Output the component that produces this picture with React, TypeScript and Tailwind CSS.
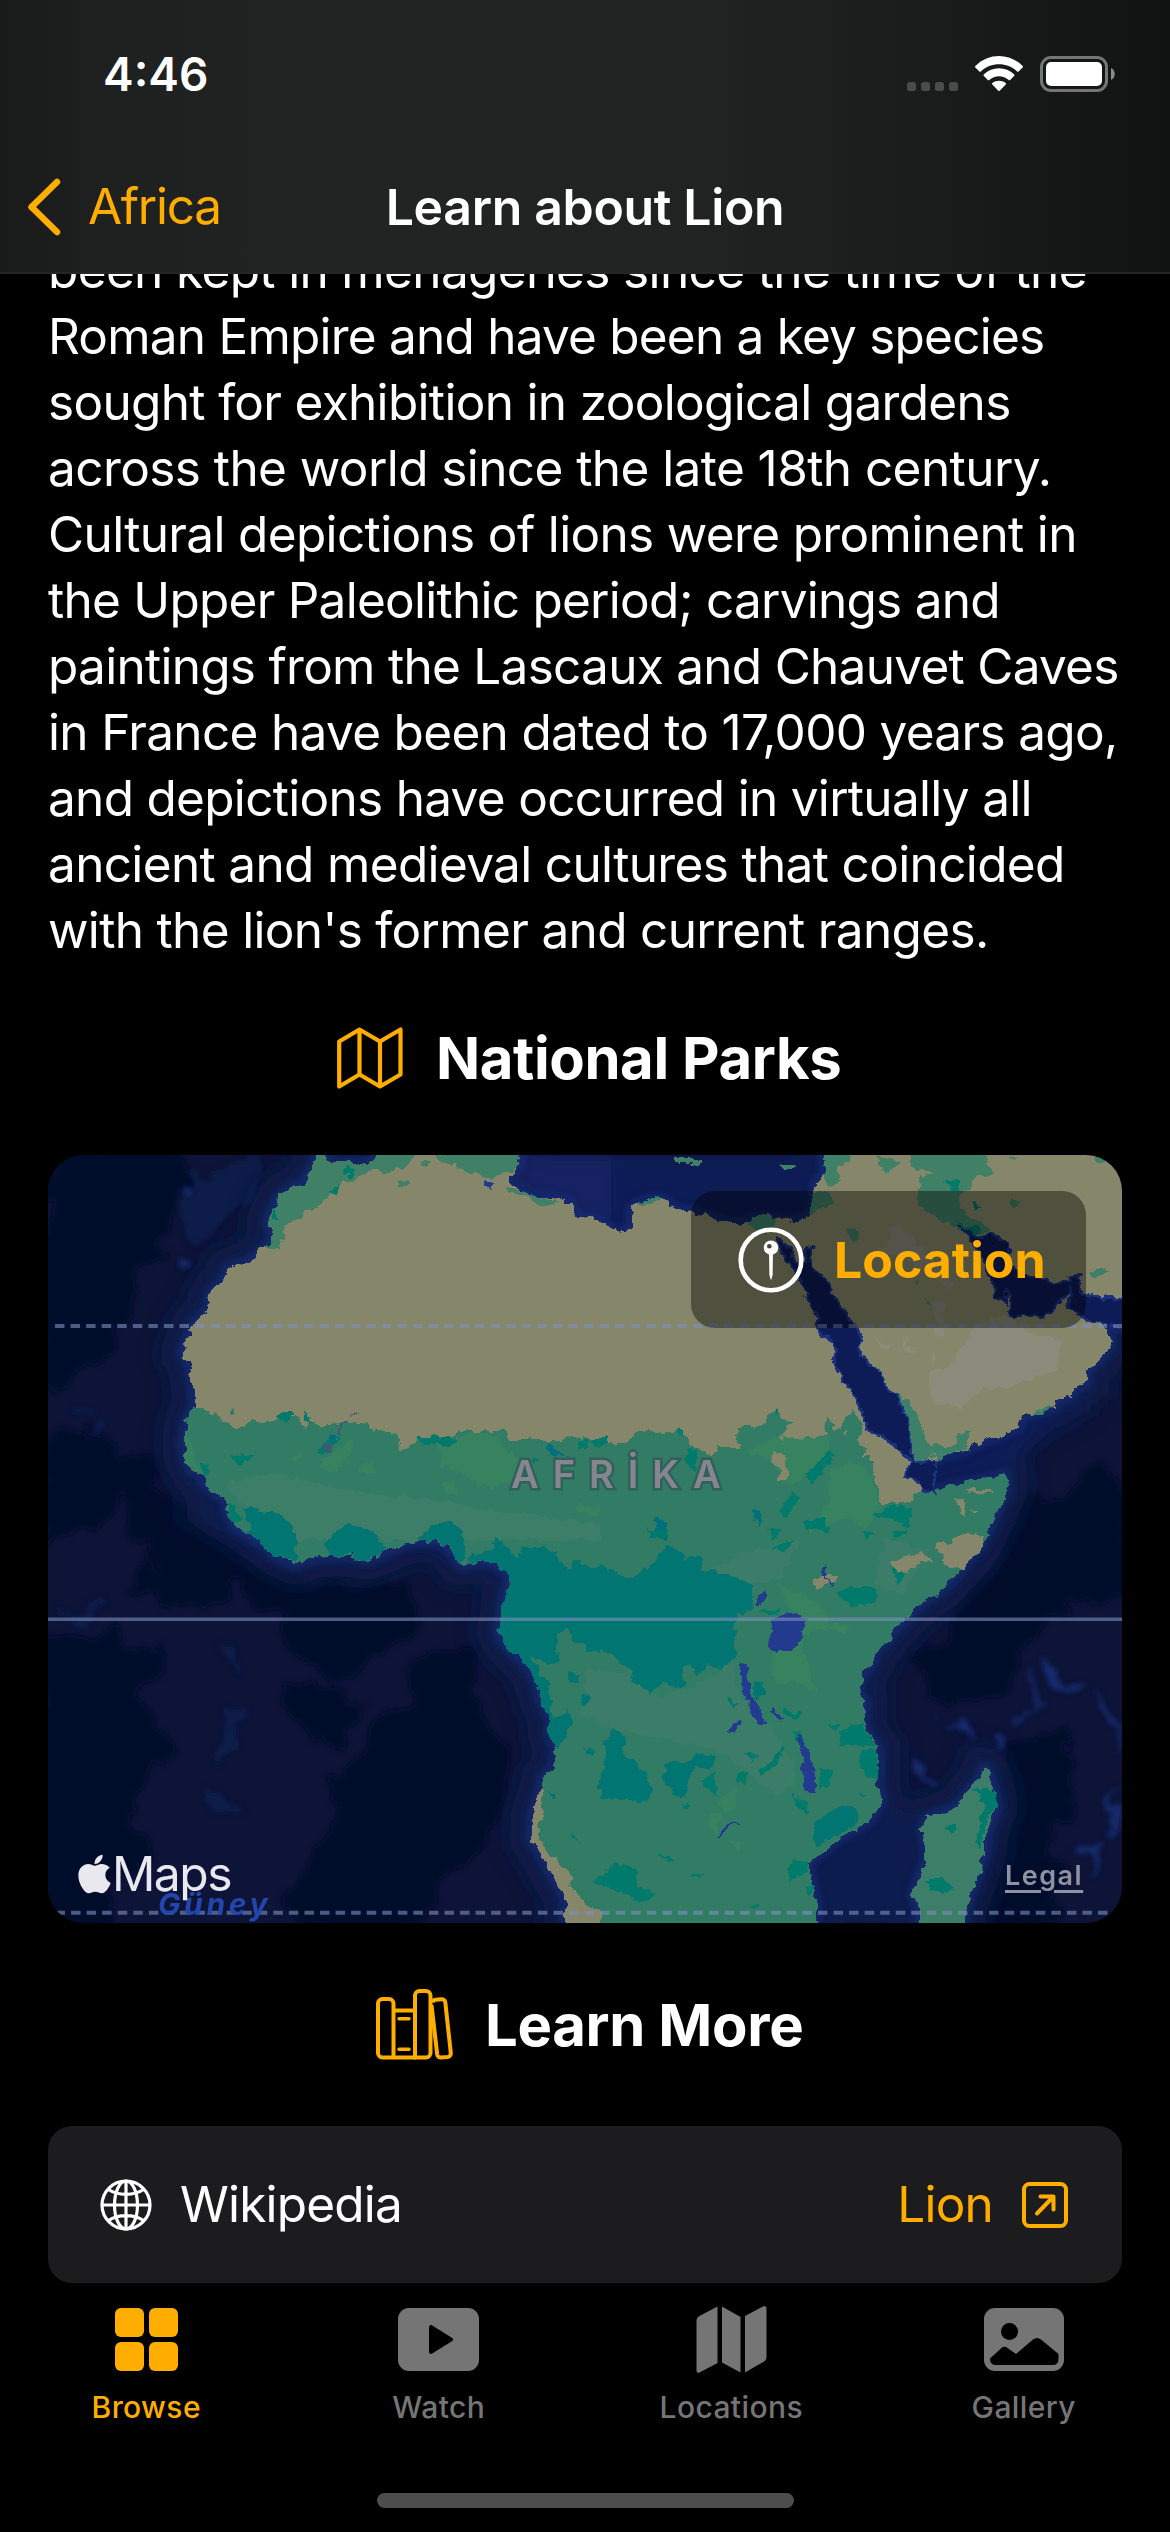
import type { ReactNode } from "react";
import { FaApple } from "react-icons/fa";

const LINES: { text: string; cls: string }[] = [
  { text: "been kept in menageries since the time of the", cls: "tracking-[-0.64px]" },
  { text: "Roman Empire and have been a key species", cls: "tracking-[-0.78px]" },
  { text: "sought for exhibition in zoological gardens", cls: "tracking-[-0.67px]" },
  { text: "across the world since the late 18th century.", cls: "tracking-[-0.57px]" },
  { text: "Cultural depictions of lions were prominent in", cls: "tracking-[-0.65px]" },
  { text: "the Upper Paleolithic period; carvings and", cls: "tracking-[-0.74px]" },
  { text: "paintings from the Lascaux and Chauvet Caves", cls: "tracking-[-0.72px]" },
  { text: "in France have been dated to 17,000 years ago,", cls: "tracking-[-0.67px]" },
  { text: "and depictions have occurred in virtually all", cls: "tracking-[-0.7px]" },
  { text: "ancient and medieval cultures that coincided", cls: "tracking-[-0.65px]" },
  { text: "with the lion's former and current ranges.", cls: "tracking-[-0.66px]" },
];

/* Map tiles: north-west, north-east, south-west, south-east. */
const NW = "translate(40 1140) scale(.357143 .333333)";
const NE = "translate(580 1140) scale(.357143 .333333)";
const SW = "translate(40 1530) scale(.357143 .333333)";
const SE = "translate(580 1530) scale(.357143 .333333)";

type Layer = { tile: string; fill: string; d: string };

const LAND: { tile: string; d: string }[] = [
  { tile: NW, d: "M775 30L798 30L800 50L825 68L920 68L940 45L942 30L1340 30L1343 75L1325 100L1310 118L1345 150L1390 170L1440 172L1485 188L1500 230L1568 248L1568 1200L600 1200L550 1160L525 1125L520 1085L455 1030L455 1000L425 995L410 965L400 900L405 880L412 840L430 800L430 750L420 700L425 680L400 650L398 635L415 590L430 550L470 510L475 470L490 440L515 420L525 385L550 375L580 368L600 350L630 322L650 305L650 280L638 255L640 235L655 205L668 170L700 145L740 125L755 95L770 70Z" },
  { tile: NE, d: "M0 235L45 240L75 255L100 275L130 275L145 255L145 200L170 185L215 172L240 180L255 200L310 215L360 228L410 248L460 252L480 235L550 235L560 245L615 238L645 225L655 180L660 130L685 100L680 30L1540 30L1540 565L1500 560L1460 555L1490 605L1455 660L1420 690L1420 730L1380 745L1375 770L1335 780L1330 800L1275 820L1240 830L1225 865L1190 880L1130 905L1080 930L1000 955L960 970L925 975L915 1010L935 1015L965 1050L990 1055L1030 1040L1100 1025L1150 1015L1190 1000L1195 1030L1190 1060L1165 1125L1130 1200L0 1200Z" },
  { tile: SW, d: "M560 0L600 25L630 50L660 80L715 105L740 92L790 80L865 78L915 90L970 68L1015 45L1060 33L1120 38L1150 65L1175 105L1270 98L1285 118L1307 122L1312 160L1298 200L1290 270L1280 300L1300 345L1340 385L1375 420L1390 470L1405 520L1430 570L1425 610L1443 650L1440 710L1410 740L1398 790L1380 850L1375 930L1400 970L1430 1030L1470 1100L1470 1200L1568 1200L1568 0Z" },
  { tile: SE, d: "M0 0L1135 0L1120 50L1060 130L1010 185L970 210L920 260L890 290L860 335L825 365L820 400L790 440L778 490L800 515L795 570L810 625L835 650L835 770L845 810L820 860L790 890L725 925L700 950L640 1000L650 1060L662 1120L660 1200L0 1200Z" },
  { tile: SE, d: "M1130 713L1140 715L1155 760L1168 830L1150 880L1140 910L1135 970L1110 1050L1085 1120L1070 1200L948 1200L945 1130L930 1095L965 1000L970 970L958 900L970 865L1010 850L1060 825L1090 780L1120 745Z" },
];

const G = "#327c66";
const T = "#007571";
const D = "#007a6b";
const L = "#38835f";
const M = "#418066";
const S = "#86866a";
const W = "#203a8e";

const COVER: Layer[] = [
  // northern coast vegetation
  { tile: NW, fill: M, d: "M775 30L798 30L800 50L825 68L920 68L940 45L942 30L1050 30L1050 55L1020 80L980 95L920 95L870 122L845 125L840 150L800 170L780 195L740 220L680 265L680 290L668 325L630 322L650 305L638 255L640 235L655 205L668 170L700 145L740 125L755 95L770 70Z M1110 52L1150 30L1340 30L1343 75L1310 105L1270 108L1250 118L1220 100L1180 85Z M1300 140L1345 150L1390 170L1462 185L1410 203L1380 180L1350 165L1310 162Z M1000 120L1032 118L1028 135L1005 142Z M1065 60L1095 50L1090 80L1068 78Z" },
  { tile: NW, fill: D, d: "M855 80L880 95L870 112L852 100Z M805 155L845 138L830 165Z M655 208L676 238L650 238Z" },
  { tile: NW, fill: W, d: "M1245 125L1272 122L1260 148Z" },
  // sahel and savanna
  { tile: NW, fill: G, d: "M430 800L470 800L475 820L505 825L510 845L535 850L555 865L600 840L620 848L660 835L690 845L720 825L740 862L755 845L780 858L830 850L860 845L915 850L925 868L970 875L1000 885L1010 925L1050 910L1070 890L1165 890L1175 865L1220 880L1290 868L1320 898L1430 905L1480 888L1520 895L1568 905L1568 1200L600 1200L550 1160L525 1125L520 1085L455 1030L455 1000L425 995L410 965L400 900L405 880L412 840Z M527 810L545 806L545 828L530 826Z" },
  { tile: NE, fill: G, d: "M0 885L30 895L80 910L130 905L155 875L230 880L270 865L290 890L310 915L335 925L370 950L385 925L450 925L440 865L480 860L485 875L525 840L530 815L555 800L565 840L600 850L570 865L570 890L620 895L690 890L695 830L720 870L740 840L760 810L785 840L790 880L775 900L800 935L780 945L815 950L820 1020L840 1040L840 1085L920 1085L965 1055L990 1055L1030 1040L1190 1000L1195 1030L1190 1060L1165 1125L1130 1200L0 1200Z" },
  { tile: SW, fill: G, d: "M560 0L600 25L630 50L660 80L715 105L740 92L790 80L865 78L915 90L970 68L1015 45L1060 33L1120 38L1150 65L1175 105L1270 98L1285 118L1307 122L1312 160L1298 200L1290 270L1280 300L1300 345L1340 385L1375 420L1390 470L1405 520L1430 570L1425 610L1443 650L1440 710L1410 740L1398 790L1380 850L1375 930L1400 970L1430 1030L1470 1100L1470 1200L1568 1200L1568 0Z" },
  { tile: SE, fill: G, d: LAND[3].d },
  { tile: SE, fill: "#3c7e68", d: LAND[4].d },
  // paler green
  { tile: NW, fill: L, d: "M1110 920L1200 880L1290 885L1295 920L1340 960L1330 1030L1230 1045L1190 1000L1150 990L1120 970Z M790 960L875 898L870 940L835 1000L780 980Z M402 868L425 905L430 950L455 995L410 970Z M895 980L920 970L940 1000L900 1000Z M700 950L745 935L720 960Z M1130 1040L1160 1020L1165 1060L1140 1060Z M1490 1090L1568 1095L1568 1125L1510 1120Z" },
  { tile: NE, fill: L, d: "M455 930L570 890L700 895L690 960L640 990L600 1040L560 1010L530 960Z M700 990L780 960L815 1010L840 1100L800 1160L740 1130L640 1180L700 1080Z M0 1095L50 1095L40 1115L0 1120Z" },
  { tile: SE, fill: L, d: "M560 170L620 190L680 240L700 300L620 310L600 250Z M535 370L620 330L640 420L665 500L610 450L540 460Z M385 810L440 780L430 840L395 830Z M355 860L400 855L375 910Z M560 770L600 680L600 760Z M420 930L450 930L440 965Z M690 280L760 285L740 310Z" },
  { tile: NW, fill: "#3c7e68", d: "M520 1030L640 1000L900 1060L1100 1080L1300 1120L1568 1150L1568 1200L700 1200L680 1130L560 1090Z" },
  { tile: SE, fill: "#3b7d68", d: "M20 420L130 430L200 500L300 480L430 400L450 500L540 600L600 720L560 800L380 660L120 600L0 560Z M350 130L480 60L620 30L560 150L490 160Z M850 20L980 60L900 200L830 160Z" },
  // rainforest
  { tile: NW, fill: T, d: "M570 1105L600 1102L625 1120L655 1112L690 1140L715 1165L710 1200L600 1200L590 1150L570 1130Z M815 1200L835 1165L865 1145L920 1195L920 1200Z M1070 1200L1090 1160L1135 1145L1170 1160L1185 1200Z" },
  { tile: NW, fill: D, d: "M525 1080L545 1100L560 1140L540 1150L525 1120Z M650 822L710 815L700 845L670 840Z M732 812L758 830L760 850L740 835Z M1060 890L1100 885L1115 895L1140 885L1165 905L1140 925L1110 905L1080 918Z M530 950L605 940L585 955L560 978Z M780 940L800 900L840 885L835 910L790 945Z M450 970L480 985L465 1000L450 995Z M1505 905L1530 895L1530 920L1510 925Z M1375 950L1395 950L1385 970Z" },
  { tile: NW, fill: "#007080", d: "M1420 908L1440 920L1475 950L1440 950L1420 925Z M815 890L835 880L832 905L815 905Z" },
  { tile: NW, fill: "#3f5a76", d: "M790 910L820 912L812 937L800 935Z M835 862L845 862L842 882L832 880Z M845 852L875 822L890 820L890 825L868 832L850 856Z" },
  { tile: NE, fill: D, d: "M0 895L25 895L15 925L0 920Z M35 905L80 882L70 910L50 925Z M265 865L290 880L285 895Z M300 920L330 930L320 1000L305 980Z M640 1000L700 930L715 940L680 990L640 1045Z M560 1120L590 1060L615 1075L570 1130Z M820 1130L880 1090L930 1110L920 1160L880 1140Z M620 1145L690 1130L695 1175L640 1170Z M530 1165L570 1165L540 1200Z M545 800L560 820L545 828Z M880 1170L920 1165L890 1200Z" },
  { tile: NE, fill: "#00707a", d: "M200 1180L215 1130L250 1155L240 1200L200 1200Z M485 1105L505 1120L505 1160L488 1140Z" },
  { tile: SW, fill: T, d: "M575 5L600 -6L690 -6L715 30L725 80L720 102L660 80Z M795 45L820 10L860 -6L930 0L945 30L975 62L915 88L860 76L805 76Z M1050 30L1090 -6L1180 0L1190 80L1165 95L1150 62L1120 36Z M1205 98L1200 85L1260 60L1275 25L1310 45L1340 85L1350 55L1410 50L1445 75L1445 100L1490 115L1520 105L1568 125L1568 365L1530 365L1525 340L1465 290L1450 310L1450 360L1460 400L1420 405L1378 378L1388 410L1430 470L1435 560L1480 540L1492 580L1455 660L1440 650L1426 605L1430 570L1405 520L1390 470L1375 420L1340 385L1300 345L1280 300L1290 270L1298 200L1312 160L1307 122L1285 118L1270 98Z M1475 415L1510 440L1500 455L1480 440Z M1505 495L1530 490L1545 510L1520 535Z M1520 648L1552 660L1550 675L1525 665Z M1480 910L1520 935L1490 930Z M1425 790L1445 795L1430 810Z" },
  { tile: SE, fill: T, d: "M-20 85L0 95L40 115L60 105L100 130L150 145L180 110L210 100L220 70L245 45L285 60L290 90L335 80L345 120L400 130L440 145L485 165L485 240L445 255L430 310L440 385L400 415L350 405L330 440L310 405L290 415L290 475L220 460L195 495L160 460L130 420L100 380L65 350L40 365L0 340L-20 340Z M70 625L100 590L125 625L120 680L150 700L190 740L205 780L200 805L165 815L60 805L50 760L75 710L65 670Z M240 700L310 690L340 665L380 680L370 715L320 715L300 760L300 800L265 800L230 740Z M0 485L32 505L15 530L0 520Z M655 875L700 845L740 825L785 840L780 880L720 915L655 955Z M480 460L515 460L515 495L490 515Z" },
  { tile: SE, fill: D, d: "M780 670L830 660L835 745L800 740Z M725 605L790 575L810 630L830 652L730 645Z M35 1055L100 1000L160 1020L160 1070L205 1090L175 1125L120 1090Z M720 180L820 165L830 215L750 230Z M585 790L635 820L635 855Z M190 0L250 0L220 32Z M670 720L705 720L705 760L670 775Z M580 1020L600 990L640 990L635 1030L590 1050Z M500 240L560 235L555 252L510 252Z M497 720L540 695L560 645L570 650L545 710L510 730Z M600 600L620 605L640 650L605 640Z M440 725L475 735L460 765L440 750Z M410 510L445 515L430 535Z M540 55L595 35L570 70Z M780 0L830 10L805 40Z M875 120L905 105L910 130L895 165Z M1098 780L1130 770L1160 785L1168 830L1140 870L1125 950L1105 940L1120 890L1130 830L1120 800Z M975 1050L1010 1040L1045 1075L1020 1095L980 1080Z M1028 885L1050 880L1045 918L1030 905Z M335 750L375 730L380 795L350 770Z M560 540L625 545L610 565L580 555Z M690 590L725 575L720 600Z M280 825L308 820L295 838Z M778 790L804 795L790 808Z M470 1125L500 1125L485 1138Z M625 1070L655 1060L650 1100Z M225 970L255 990L245 1000Z M305 1035L345 1025L340 1045Z M465 665L500 675L480 700Z" },
  // arid pockets
  { tile: NE, fill: S, d: "M540 935L575 950L582 1010L555 1020L560 985L540 970Z M555 890L575 895L570 910Z M1050 1075L1075 1080L1080 1125L1060 1115Z M1090 1110L1118 1115L1105 1125Z M1075 1048L1150 1050L1155 1062L1090 1060Z M1045 1190L1110 1180L1120 1200L1045 1200Z M640 880L675 870L660 885Z M735 880L745 865L745 890Z" },
  { tile: SE, fill: S, d: "M990 40L1040 35L1070 10L1125 15L1115 65L1070 122L1015 95L1020 75L990 68Z M875 95L960 65L990 95L950 85L920 125L875 120Z M650 150L680 135L720 140L705 160L670 175Z M0 1125L30 1145L48 1200L0 1200Z" },
  { tile: SW, fill: S, d: "M1398 782L1408 785L1408 850L1395 890L1400 930L1430 980L1470 1020L1490 1040L1485 1065L1510 1100L1530 1130L1568 1140L1568 1200L1470 1200L1470 1100L1430 1030L1400 970L1375 930L1380 850Z" },
  // arabia and the levant
  { tile: NE, fill: "#3c806b", d: "M880 760L920 780L950 850L985 915L1030 920L1060 910L1055 875L1085 870L1085 925L1000 955L1005 935L960 970L935 965L910 870L905 800Z M1265 820L1300 800L1320 803L1300 818Z M470 250L480 235L515 225L550 235L550 255L515 285L500 265Z M1425 395L1450 385L1478 405L1440 408Z" },
  { tile: NE, fill: M, d: "M920 30L1130 30L1155 110L1110 100L1080 160L1060 190L1085 230L1120 240L1145 270L1100 290L1040 260L990 230L945 190L950 110L985 100L990 90L930 90Z M680 30L750 30L755 65L720 80L730 130L690 140L685 100Z M820 50L890 60L890 75L855 97Z M660 155L690 160L710 185L680 205L650 235L640 220Z M750 270L780 275L775 305L755 300Z M1205 170L1235 185L1215 205Z M1435 30L1500 30L1500 62L1450 60Z M1195 50L1225 58L1210 68Z M160 190L215 168L240 178L180 198Z M960 480L985 500L975 505Z M935 420L950 430L940 445Z" },
  { tile: NE, fill: D, d: "M1020 125L1060 120L1060 150L1040 155Z M1095 180L1118 195L1105 210Z M1050 240L1120 270L1110 290Z" },
  { tile: NE, fill: "#8b8b7b", d: "M980 700L1030 690L1050 650L1075 620L1090 570L1130 545L1210 530L1260 580L1350 605L1330 695L1200 740L1120 750L1065 805L980 785Z M905 590L945 640L915 635Z M985 635L1002 650L985 672Z M838 600L862 620L860 640L840 625Z M870 255L905 255L935 300L1050 430L1040 450L960 390L900 350L820 330L870 300Z M990 480L1020 490L1020 590L995 580Z" },
];

const WATER: { tile: string; d: string }[] = [
  { tile: NE, d: "M553 300L570 303L605 365L630 372L632 335L648 318L645 370L690 420L725 490L775 560L790 600L785 645L850 715L860 750L890 770L915 840L925 900L935 970L965 970L1000 955L990 1055L965 1050L935 1015L912 1012L925 965L860 900L820 880L800 855L780 780L720 700L710 605L665 575L665 530L630 465L610 400L575 350Z" },
  { tile: NE, d: "M1060 255L1085 270L1110 290L1160 280L1195 310L1200 370L1240 400L1330 430L1370 425L1370 408L1400 410L1405 460L1460 472L1540 480L1540 570L1450 545L1415 540L1390 525L1370 500L1370 450L1340 490L1300 530L1220 535L1200 515L1208 490L1195 450L1190 495L1165 465L1155 430L1120 340L1090 290Z" },
];

const LAKES =
  "M565 255L600 250L618 266L642 268L620 310L605 350L580 365L535 365L530 345L540 300L540 270Z M445 392L460 400L475 490L500 530L522 580L500 582L460 500Z M607 612L625 620L640 660L650 720L660 790L635 785L625 740L618 660Z M530 540L545 538L578 572L565 572Z M415 605L445 573L455 580L435 608Z M488 220L520 185L530 195L500 228Z M683 100L690 103L690 150L708 175L700 175L678 135Z M382 918L420 878L448 880L446 886L425 886L390 920Z";

function AfricaMap() {
  return (
    <svg viewBox="48 1155 1074 768" className="block h-[768px] w-[1074px]">
      <defs>
        <filter id="coast" x="0" y="0" width="100%" height="100%">
          <feTurbulence type="fractalNoise" baseFrequency=".09" numOctaves={3} seed={4} result="n" />
          <feDisplacementMap in="SourceGraphic" in2="n" scale="11" xChannelSelector="R" yChannelSelector="G" />
        </filter>
        <filter id="soft" x="-10%" y="-10%" width="120%" height="120%">
          <feGaussianBlur stdDeviation="10" />
        </filter>
        <filter id="shelf" x="-10%" y="-10%" width="120%" height="120%">
          <feGaussianBlur stdDeviation="3.5" />
        </filter>
        <filter id="seabed" x="-10%" y="-10%" width="120%" height="120%">
          <feTurbulence type="fractalNoise" baseFrequency=".025" numOctaves={3} seed={9} result="n" />
          <feDisplacementMap in="SourceGraphic" in2="n" scale="50" xChannelSelector="R" yChannelSelector="G" result="d" />
          <feGaussianBlur in="d" stdDeviation="2.5" />
        </filter>
        <g id="landmass">
          {LAND.map((p, i) => (
            <path key={i} transform={p.tile} d={p.d} />
          ))}
        </g>
      </defs>
      <rect x="48" y="1155" width="1074" height="768" fill="#0d1438" />
      <g filter="url(#seabed)">
        <g transform={NW} fill="#000d2b">
          <path d="M20 30L380 30L400 130L330 300L260 480L190 660L60 740L0 760L0 30Z" />
          <path d="M20 860L110 880L200 940L300 960L340 1080L430 1140L600 1230L340 1230L250 1090L130 1170L20 1200Z" />
          <path d="M400 90L620 60L600 160L520 260L430 330L380 300Z" fill="#0f1b48" />
        </g>
        <g transform={SW} fill="#000d2b">
          <path d="M330 -20L520 20L620 120L780 170L960 130L1060 160L1060 260L960 400L820 440L720 370L640 260L580 170L420 240L240 180L310 100Z" />
          <path d="M0 320L200 310L360 360L300 500L340 700L250 870L280 980L200 1060L200 1240L-40 1240Z" />
          <path d="M1090 390L1190 400L1240 560L1310 640L1270 800L1270 960L1120 1050L1100 1200L820 1230L700 1100L740 970L830 920L830 760L960 560Z" />
          <path d="M700 480L830 470L900 560L820 650L700 560Z" />
          <path d="M500 520L560 520L560 640L520 680Z M480 780L560 840L480 860Z M460 340L570 360L560 430Z M60 250L140 220L170 260Z" fill="#0e1c48" />
        </g>
        <g transform={SE} fill="#000d2b">
          <path d="M1180 0L1480 -20L1560 80L1520 200L1380 220L1260 330L1200 480L1100 520L980 500L960 400L1040 270L1170 130Z" />
          <path d="M1200 640L1360 600L1390 780L1320 900L1380 1060L1320 1180L1100 1180L1180 940Z" />
        </g>
        <g transform={NE} fill="#000d2b">
          <path d="M1270 1080L1390 1040L1480 930L1500 1010L1540 1200L1180 1200L1200 1130Z" />
        </g>
      </g>
      <g filter="url(#soft)">
        <use href="#landmass" stroke="#0f1c4c" strokeOpacity=".9" strokeWidth="120" fill="none" />
        <path transform={NE} d="M0 30L680 30L660 200L600 250L300 220L100 280L0 240Z" fill="#0e1c55" />
        <path transform={NW} d="M1345 30L1600 30L1600 250L1500 220L1320 120Z" fill="#122463" />
        <path transform={SE} d="M845 820L930 850L930 1200L660 1200L660 1000Z" fill="#0f1b50" />
        <path transform={NE} d="M960 980L1240 850L1380 760L1400 800L1200 980L980 1050Z" fill="#0f1e58" />
      </g>
      <g filter="url(#shelf)">
        <use href="#landmass" stroke="#1a2f7c" strokeOpacity=".75" strokeWidth="24" fill="none" />
      </g>
      <g filter="url(#seabed)">
        <path
          transform={SE}
          d="M1300 400L1350 400L1390 450L1400 480L1330 450Z M1430 500L1490 580L1520 640L1518 680L1480 600Z M1518 760L1480 880L1460 920L1440 900L1490 800Z M1400 960L1440 940L1415 1020Z M1245 470L1265 450L1260 520L1245 550Z M1030 560L1060 570L1080 620L1060 620Z M920 680L990 730L980 742L930 710Z M1160 600L1210 590L1190 640L1160 650Z"
          fill="#172c70"
        />
        <path transform={NW} d="M350 335L410 355L430 380L360 365Z M375 170L410 155L410 190Z M95 800L150 825L140 835Z M130 885L195 865L180 890Z" fill="#15296a" />
      </g>
      <g filter="url(#coast)" shapeRendering="crispEdges">
        <use href="#landmass" fill="#86866a" />
        {COVER.map((p, i) => (
          <path key={i} transform={p.tile} d={p.d} fill={p.fill} />
        ))}
        {WATER.map((p, i) => (
          <path key={i} transform={p.tile} d={p.d} fill="#0e1d57" stroke="#1b3180" strokeWidth="7" />
        ))}
        <path transform={SE} d={LAKES} fill={W} />
        <path transform={NE} d="M260 50L350 68L330 76L270 66Z M562 75L602 72L585 95Z" fill={M} />
      </g>
      <g stroke="#7f8fbd" strokeOpacity=".6" strokeWidth="4">
        <path d="M55 1326H1122" strokeDasharray="9.5 6.06" />
        <path d="M48 1619.300H1122" strokeWidth="3.600" />
        <path d="M55.500 1912.700H1110" strokeDasharray="9.500 6.060" />
      </g>
    </svg>
  );
}

function Label({ children, className = "" }: { children: ReactNode; className?: string }) {
  return <span className={"inline-block whitespace-nowrap " + className}>{children}</span>;
}

function Tab({ label, active, children }: { label: string; active?: boolean; children: ReactNode }) {
  return (
    <div className={"flex flex-1 flex-col items-center " + (active ? "text-[#ffae00]" : "text-[#757575]")}>
      <div className="flex h-[107px] items-center justify-center">{children}</div>
      <div className="-mt-[6px] flex h-[40px] items-center text-[30px] font-medium leading-[40px] tracking-[0.4px]">
        <Label>{label}</Label>
      </div>
    </div>
  );
}

export default function App() {
  return (
    <div className="relative flex h-[2532px] w-[1170px] flex-col overflow-hidden bg-black font-['Inter',sans-serif] text-white">
      <header className="relative z-10 h-[274px] shrink-0 border-b-2 border-[#252626] bg-[linear-gradient(90deg,#191b1a_0%,#1f2120_10%,#222423_35%,#212322_60%,#1a1c1b_80%,#111212_100%)]">
        <div className="flex h-[148px] items-center pl-[103px] pr-[55px]">
          <Label className="text-[46px] font-semibold leading-none">4:46</Label>
          <div className="ml-auto flex items-center">
            <div className="mr-[17px] mt-[25px] flex gap-[5px]">
              {[0, 1, 2, 3].map((i) => (
                <div key={i} className="size-[9px] rounded-[2.5px] bg-[#4a4b4b]" />
              ))}
            </div>
            <svg viewBox="0 0 48 36" className="mr-[17px] h-[36px] w-[48px]" fill="white">
              <path d="M0.400 11.500a1 1 0 0 1 0-1.500C13.500-3.300 34.500-3.300 47.600 10a1 1 0 0 1 0 1.500L43.600 15.600a1 1 0 0 1-1.400 0C32 5.900 16 5.900 5.800 15.600a1 1 0 0 1-1.400 0Z" />
              <path d="M8.700 19.800a1 1 0 0 1 0-1.400C17.300 10.300 30.700 10.300 39.300 18.400a1 1 0 0 1 0 1.400L35.200 24a1 1 0 0 1-1.400 0C28.200 18.900 19.800 18.900 14.200 24a1 1 0 0 1-1.400 0Z" />
              <path d="M17.300 28.600a1 1 0 0 1 0-1.500C21.200 23.900 26.800 23.900 30.700 27.100a1 1 0 0 1 0 1.500L24.700 34.700a1 1 0 0 1-1.400 0Z" />
            </svg>
            <svg viewBox="0 0 75 36" className="h-[36px] w-[75px]">
              <rect x="1.500" y="1.500" width="65" height="33" rx="9.500" fill="none" stroke="#747575" strokeWidth="3" />
              <rect x="6" y="6" width="56" height="24" rx="5" fill="white" />
              <path d="M71 12c5 2 5 10 0 12Z" fill="#8a8b8b" />
            </svg>
          </div>
        </div>
        <div className="relative flex h-[118px] items-center pl-[27px] text-[#ffae00]">
          <svg viewBox="0 0 34 58" className="h-[58px] w-[34px]" fill="none" stroke="currentColor" strokeWidth="6.500" strokeLinecap="round" strokeLinejoin="round">
            <path d="M30 4L4.500 29L30 54" />
          </svg>
          <Label className="ml-[27px] text-[49.5px] leading-none tracking-[-1.3px]">Africa</Label>
          <div className="absolute inset-x-0 flex justify-center text-white">
            <Label className="text-[50px] font-semibold leading-none tracking-[-0.35px]">Learn about Lion</Label>
          </div>
        </div>
      </header>

      <main className="-mt-[37px] flex shrink-0 flex-col">
        <div className="pl-[48px] text-[49.5px] leading-[66px]">
          {LINES.map((l) => (
            <div key={l.text} className="h-[66px]">
              <Label className={l.cls}>{l.text}</Label>
            </div>
          ))}
        </div>

        <div className="mt-[58px] flex h-[74px] items-center pl-[336px]">
          <svg viewBox="0 0 68 66" className="h-[66px] w-[68px] text-[#ffae00]" fill="none" stroke="currentColor" strokeWidth="4.200" strokeLinejoin="round">
            <path d="M3.200 16.500L23.500 4.500L44 16.500L64.500 4.500V49.500L44 61.500L23.500 49.500L3.200 61.500Z" />
            <path d="M23.500 4.500V49.500M44 16.500V61.500" />
          </svg>
          <Label className="ml-[32px] text-[58px] font-bold leading-[74px] tracking-[-0.4px]">National Parks</Label>
        </div>

        <div className="relative mx-[48px] mt-[60px] h-[768px] overflow-hidden rounded-[36px]">
          <AfricaMap />
          <Label className="absolute left-[463px] top-[296px] text-[38px] font-semibold leading-[46px] tracking-[14px] text-[#87858f] [-webkit-text-stroke:5px_#31625a] [paint-order:stroke_fill]">
            AFRİKA
          </Label>
          <Label className="absolute left-[110px] top-[721px] text-[30px] font-bold italic leading-[56px] tracking-[3.6px] text-[#2346ae]">Güney</Label>
          <div className="absolute left-[30px] top-[691px] flex h-[56px] items-center text-[#e8e8ee]">
            <FaApple className="h-[44px] w-[33px]" />
            <Label className="ml-[1px] text-[48px] leading-[56px] tracking-[-1.5px]">Maps</Label>
          </div>
          <Label className="absolute left-[957px] top-[701px] text-[27px] font-semibold leading-[40px] tracking-[1.5px] text-[#8f92a0] underline decoration-[3px] underline-offset-[5px]">
            Legal
          </Label>
          <div className="absolute right-[36px] top-[36px] flex h-[137px] w-[395px] items-center rounded-[24px] bg-black/40 pl-[47px]">
            <svg viewBox="0 0 66 66" className="h-[66px] w-[66px]">
              <circle cx="33" cy="33" r="30.300" fill="none" stroke="white" strokeWidth="4.600" />
              <path d="M31 24h4l-.400 24L33 53.500L31.400 48Z" fill="white" />
              <circle cx="33" cy="20.700" r="7.200" fill="white" />
              <circle cx="31.300" cy="19.200" r="2.300" fill="#45453c" />
            </svg>
            <Label className="ml-[30px] text-[50px] font-bold leading-none text-[#ffae00]">Location</Label>
          </div>
        </div>

        <div className="mt-[65px] flex h-[74px] items-center pl-[375px]">
          <svg viewBox="0 0 79 72" className="h-[72px] w-[79px] text-[#ffae00]" fill="none" stroke="currentColor" strokeWidth="4" strokeLinejoin="round">
            <path d="M3 14.500a4.500 4.500 0 0 1 4.500-4.500h6.500a4.500 4.500 0 0 1 4.500 4.500V68.500H7.500A4.500 4.500 0 0 1 3 64Z" />
            <path d="M18.500 21.500H39.500M18.500 68.500H41" />
            <path d="M40 6.500A4.500 4.500 0 0 1 44.500 2H51a4.500 4.500 0 0 1 4.500 4.500V64a4.500 4.500 0 0 1-4.500 4.500H40Z" />
            <path d="M24 29.700H34M24 60.300H34" strokeWidth="3.500" strokeLinecap="round" />
            <path d="M57.500 13.500a3.500 3.500 0 0 1 3-2.700L66.500 10.300a3.500 3.500 0 0 1 3.800 3L75.800 64a3.500 3.500 0 0 1-3 3.900L66 68.500a3.500 3.500 0 0 1-3.800-3L56.500 16" />
          </svg>
          <Label className="ml-[31px] text-[58px] font-bold leading-[74px] tracking-[-0.35px]">Learn More</Label>
        </div>

        <div className="mx-[48px] mt-[64px] flex h-[157px] items-center rounded-[24px] bg-[#1c1c1e] pl-[52px] pr-[53px] text-[49.5px]">
          <svg viewBox="0 0 52 52" className="h-[52px] w-[52px]" fill="none" stroke="currentColor" strokeWidth="3.200">
            <circle cx="26" cy="26" r="24" />
            <ellipse cx="26" cy="26" rx="11.500" ry="24" />
            <path d="M2 26H50M26 2V50M8.500 10.500C18 17 34 17 43.500 10.500M8.500 41.500C18 35 34 35 43.500 41.500" />
          </svg>
          <Label className="ml-[28px] leading-none tracking-[-0.8px]">Wikipedia</Label>
          <div className="ml-auto flex items-center text-[#ffae00]">
            <Label className="leading-none tracking-[-0.8px]">Lion</Label>
            <svg viewBox="0 0 48 48" className="ml-[28px] h-[48px] w-[48px]" fill="none" stroke="currentColor" strokeWidth="4" strokeLinecap="round" strokeLinejoin="round">
              <rect x="3" y="3" width="42" height="42" rx="5.500" />
              <path d="M16 32.500L32 16M19.500 15.500H32.500V28.500" />
            </svg>
          </div>
        </div>
      </main>

      <nav className="mt-[3px] flex h-[207px] shrink-0">
        <Tab label="Browse" active>
          <div className="grid grid-cols-2 gap-[5px]">
            {[0, 1, 2, 3].map((i) => (
              <div key={i} className="size-[29px] rounded-[6px] bg-[#ffae00]" />
            ))}
          </div>
        </Tab>
        <Tab label="Watch">
          <svg viewBox="0 0 81 63" className="h-[63px] w-[81px]">
            <rect width="81" height="63" rx="11" fill="currentColor" />
            <path d="M31 19.500c0-2 1.500-3 3.200-2L54.300 30a1.800 1.800 0 0 1 0 3L34.200 45.500c-1.700 1-3.200 0-3.200-2Z" fill="black" />
          </svg>
        </Tab>
        <Tab label="Locations">
          <svg viewBox="0 0 71 67" className="h-[67px] w-[71px]" fill="currentColor">
            <path d="M21.500 0.500V57L4 66.300C1.500 67.500 0.500 66.500 0.500 64V15c0-2.500 1-3.800 3-5Z" />
            <path d="M26 0.500L44.500 11V66.500L26 56.500Z" />
            <path d="M49 10L66.500 0.800C69 -0.200 70.500 0.500 70.500 3V51c0 2-1 3.500-2.500 4.500L49 66.500Z" />
          </svg>
        </Tab>
        <Tab label="Gallery">
          <svg viewBox="0 0 80 63" className="h-[63px] w-[80px]">
            <rect width="80" height="63" rx="11" fill="currentColor" />
            <circle cx="25.500" cy="23.500" r="8.500" fill="black" />
            <path d="M6 50.500L17.500 40q3-2.500 6 0L32 46L49 31.500q4-3 8 0L74.500 46V51q0 6-6 6H12q-6 0-6-6Z" fill="black" />
          </svg>
        </Tab>
      </nav>
      <div className="mx-auto h-[15px] w-[417px] shrink-0 rounded-full bg-[#4d4d4d]" />
    </div>
  );
}
